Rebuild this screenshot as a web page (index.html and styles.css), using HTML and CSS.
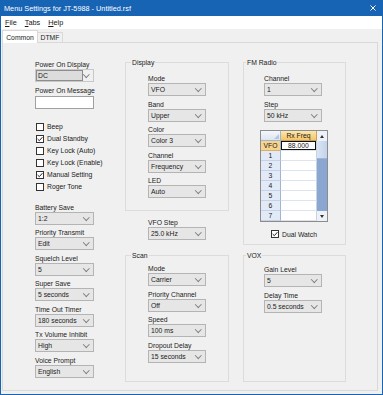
FILE: index.html
```html
<!DOCTYPE html>
<html>
<head>
    <title>Menu Settings for JT-5988 - Untitled.rsf</title>
    <meta name="viewport" content="width=device-width, initial-scale=1.0">
    <link rel="stylesheet" href="styles.css">
</head>
<body>
    <div class="window">
        <div class="titlebar">
            <span class="title">Menu Settings for JT-5988 - Untitled.rsf</span>
            <svg class="close" width="6" height="6" viewBox="0 0 6 6">
                <path d="M0.5 0.5 L5.5 5.5 M5.5 0.5 L0.5 5.5" stroke="#fff" stroke-width="1" fill="none"/>
            </svg>
        </div>
        <div class="menubar">
            <span class="menu-item"><u>F</u>ile</span>
            <span class="menu-item"><u>T</u>abs</span>
            <span class="menu-item"><u>H</u>elp</span>
        </div>

        <div class="tab-strip">
            <div class="tab active">Common</div>
            <div class="tab">DTMF</div>
        </div>

        <div class="tab-page">
            <!-- left column -->
            <div class="col-left">
                <div class="field">
                    <div class="field-label">Power On Display</div>
                    <div class="combo editable"><span class="combo-edit">DC</span></div>
                </div>
                <div class="field">
                    <div class="field-label">Power On Message</div>
                    <div class="textbox"></div>
                </div>

                <div class="checks">
                    <div class="check"><span class="box"></span>Beep</div>
                    <div class="check"><span class="box"><svg width="6" height="6" viewBox="0 0 6 6"><path d="M0.6 3 L2.3 4.7 L5.4 1.2" stroke="#222" stroke-width="1" fill="none"/></svg></span>Dual Standby</div>
                    <div class="check"><span class="box"></span>Key Lock (Auto)</div>
                    <div class="check"><span class="box"></span>Key Lock (Enable)</div>
                    <div class="check"><span class="box"><svg width="6" height="6" viewBox="0 0 6 6"><path d="M0.6 3 L2.3 4.7 L5.4 1.2" stroke="#222" stroke-width="1" fill="none"/></svg></span>Manual Setting</div>
                    <div class="check"><span class="box"></span>Roger Tone</div>
                </div>

                <div class="field">
                    <div class="field-label">Battery Save</div>
                    <div class="combo">1:2</div>
                </div>
                <div class="field">
                    <div class="field-label">Priority Transmit</div>
                    <div class="combo">Edit</div>
                </div>
                <div class="field">
                    <div class="field-label">Squelch Level</div>
                    <div class="combo">5</div>
                </div>
                <div class="field">
                    <div class="field-label">Super Save</div>
                    <div class="combo">5 seconds</div>
                </div>
                <div class="field">
                    <div class="field-label">Time Out Timer</div>
                    <div class="combo">180 seconds</div>
                </div>
                <div class="field">
                    <div class="field-label">Tx Volume Inhibit</div>
                    <div class="combo">High</div>
                </div>
                <div class="field">
                    <div class="field-label">Voice Prompt</div>
                    <div class="combo">English</div>
                </div>
            </div>

            <!-- middle column, top -->
            <div class="col-mid">
                <fieldset class="group">
                    <legend>Display</legend>
                    <div class="group-body display-body">
                        <div class="field">
                            <div class="field-label">Mode</div>
                            <div class="combo">VFO</div>
                        </div>
                        <div class="field">
                            <div class="field-label">Band</div>
                            <div class="combo">Upper</div>
                        </div>
                        <div class="field">
                            <div class="field-label">Color</div>
                            <div class="combo">Color 3</div>
                        </div>
                        <div class="field">
                            <div class="field-label">Channel</div>
                            <div class="combo">Frequency</div>
                        </div>
                        <div class="field">
                            <div class="field-label">LED</div>
                            <div class="combo">Auto</div>
                        </div>
                    </div>
                </fieldset>
                <div class="field vfo-step">
                    <div class="field-label">VFO Step</div>
                    <div class="combo">25.0 kHz</div>
                </div>
            </div>

            <!-- right column, top -->
            <fieldset class="group right fm">
                <legend>FM Radio</legend>
                <div class="group-body fm-body">
                    <div class="field">
                        <div class="field-label">Channel</div>
                        <div class="combo">1</div>
                    </div>
                    <div class="field">
                        <div class="field-label">Step</div>
                        <div class="combo">50 kHz</div>
                    </div>

                    <div class="fm-table">
                        <div class="dgv">
                            <div class="dgv-cells">
                                <div class="hdr corner"></div>
                                <div class="hdr col-sel">Rx Freq</div>
                                <div class="rowhdr sel">VFO</div><div class="cell"><span class="cell-edit">88.000</span></div>
                                <div class="rowhdr">1</div><div class="cell"></div>
                                <div class="rowhdr">2</div><div class="cell"></div>
                                <div class="rowhdr">3</div><div class="cell"></div>
                                <div class="rowhdr">4</div><div class="cell"></div>
                                <div class="rowhdr">5</div><div class="cell"></div>
                                <div class="rowhdr">6</div><div class="cell"></div>
                                <div class="rowhdr">7</div><div class="cell"></div>
                            </div>
                            <div class="vscroll">
                                <div class="sb-btn"><span class="arrow-up"></span></div>
                                <div class="sb-thumb"></div>
                                <div class="sb-track"></div>
                                <div class="sb-btn"><span class="arrow-down"></span></div>
                            </div>
                        </div>
                        <div class="check dual-watch"><span class="box"><svg width="6" height="6" viewBox="0 0 6 6"><path d="M0.6 3 L2.3 4.7 L5.4 1.2" stroke="#222" stroke-width="1" fill="none"/></svg></span>Dual Watch</div>
                    </div>
                </div>
            </fieldset>

            <!-- bottom row -->
            <fieldset class="group scan">
                <legend>Scan</legend>
                <div class="group-body scan-body">
                    <div class="field">
                        <div class="field-label">Mode</div>
                        <div class="combo">Carrier</div>
                    </div>
                    <div class="field">
                        <div class="field-label">Priority Channel</div>
                        <div class="combo">Off</div>
                    </div>
                    <div class="field">
                        <div class="field-label">Speed</div>
                        <div class="combo">100 ms</div>
                    </div>
                    <div class="field">
                        <div class="field-label">Dropout Delay</div>
                        <div class="combo">15 seconds</div>
                    </div>
                </div>
            </fieldset>

            <fieldset class="group right vox">
                <legend>VOX</legend>
                <div class="group-body vox-body">
                    <div class="field">
                        <div class="field-label">Gain Level</div>
                        <div class="combo">5</div>
                    </div>
                    <div class="field">
                        <div class="field-label">Delay Time</div>
                        <div class="combo">0.5 seconds</div>
                    </div>
                </div>
            </fieldset>
        </div>
    </div>
</body>
</html>
```

FILE: styles.css
```css
* {
    box-sizing: border-box;
}

body {
    margin: 0;
    font-family: "Liberation Sans", Arial, sans-serif;
    font-size: 6.8px;
    color: #1a1a1a;
    background: #fff;
}

.window {
    width: 383px;
    height: 395px;
    border: 1px solid #1763b4;
    border-top: 0;
    background: #f0f0f0;
    display: flex;
    flex-direction: column;
}

/* title + menu */
.titlebar {
    height: 16px;
    flex: none;
    background: #1763b4;
    color: #fff;
    font-size: 7.3px;
    display: flex;
    align-items: center;
    padding-left: 3px;
}

.title {
    flex: 1;
}

.close {
    margin-right: 6px;
}

.menubar {
    height: 13px;
    flex: none;
    background: #fff;
    font-size: 7.3px;
    display: flex;
    align-items: center;
}

.menu-item {
    padding: 0 4px;
}

/* tabs */
.tab-strip {
    height: 14px;
    flex: none;
    margin: 0 4px -1px 1px;
    display: flex;
    align-items: flex-end;
}

.tab {
    height: 10px;
    width: 25px;
    margin-bottom: 1px;
    border: 1px solid #d9d9d9;
    border-bottom: 0;
    border-left: 0;
    background: #f0f0f0;
    display: flex;
    align-items: center;
    justify-content: center;
}

.tab.active {
    height: 13px;
    width: 36px;
    margin-bottom: 0;
    border-left: 1px solid #d9d9d9;
    background: #fff;
    position: relative;
    z-index: 1;
}

.tab-page {
    flex: 1;
    margin: 0 4px 3px 1px;
    border: 1px solid #d9d9d9;
    padding: 15px 0 8px 32px;
    display: grid;
    grid-template-columns: 76px 104px 103px;
    grid-template-rows: auto 1fr;
    column-gap: 14px;
    row-gap: 6px;
}

/* fields */
.field-label {
    height: 9px;
    line-height: 9px;
    white-space: nowrap;
}

.field + .field {
    margin-top: 3.5px;
}

.combo {
    width: 58px;
    height: 13px;
    border: 1px solid #b4b4b4;
    background: #e6e6e6;
    padding-left: 2px;
    display: flex;
    align-items: center;
    white-space: nowrap;
}

.combo::after {
    content: "";
    width: 3.5px;
    height: 3.5px;
    margin-left: auto;
    margin-right: 5px;
    margin-top: -2px;
    border-right: 1px solid #808080;
    border-bottom: 1px solid #808080;
    transform: rotate(45deg);
    flex: none;
}

.combo.editable {
    background: #f0f0f0;
    border-color: #c8c8c8;
    padding: 0;
}

.combo-edit {
    width: 47px;
    height: 11px;
    border: 1px solid #8d8d8d;
    background: #dcdcdc;
    padding-left: 1px;
    display: flex;
    align-items: center;
}

.textbox {
    width: 59px;
    height: 13px;
    margin-top: 1.5px;
    border: 1px solid #a0a0a0;
    background: #fff;
}

/* checkboxes */
.check {
    height: 12px;
    display: flex;
    align-items: center;
    gap: 3px;
    white-space: nowrap;
}

.box {
    width: 8px;
    height: 8px;
    border: 1px solid #333;
    background: #fff;
    display: flex;
    flex: none;
}

/* left column */
.col-left {
    grid-column: 1;
    grid-row: 1 / 3;
    margin-top: 2px;
}

.col-left .combo {
    width: 59px;
}

.checks {
    margin: 11.5px 0 10px 1px;
}

/* group boxes */
.group {
    margin: 0;
    padding: 0;
    min-width: 0;
    border: 1px solid #dcdcdc;
}

.group legend {
    margin-left: 5px;
    padding: 0 1px;
    line-height: 9px;
}

.group.right legend {
    margin-left: 2px;
}

.display-body {
    padding: 7px 0 12px 22px;
}

.vfo-step {
    margin: 7px 0 0 23px;
}

.fm {
    grid-column: 3;
    grid-row: 1;
    align-self: start;
}

.fm-body {
    padding: 7px 0 5px 20px;
}

.scan {
    grid-column: 2;
    grid-row: 2;
}

.scan-body {
    padding: 4px 0 0 22px;
}

.vox {
    grid-column: 3;
    grid-row: 2;
}

.vox-body {
    padding: 5px 0 0 20px;
}

/* FM channel grid */
.fm-table {
    width: 68px;
    margin: 8.5px 0 0 -4px;
}

.dgv {
    width: 68px;
    height: 92px;
    border: 1px solid #8c8c8c;
    display: flex;
    background: #fff;
}

.dgv-cells {
    display: grid;
    grid-template-columns: 20px 36px;
    grid-auto-rows: 10px;
}

.hdr,
.rowhdr,
.cell {
    display: flex;
    align-items: center;
    justify-content: center;
}

.hdr.corner {
    background: linear-gradient(#f4f7fc, #dbe5f2);
    border-right: 1px solid #9eb6ce;
    border-bottom: 1px solid #9eb6ce;
    justify-content: flex-end;
    align-items: flex-end;
    padding: 0 1px 1px 0;
}

.hdr.corner::after {
    content: "";
    border-left: 5px solid transparent;
    border-bottom: 5px solid #b4c5dc;
}

.hdr.col-sel {
    background: linear-gradient(#fde6ae, #f5c566);
    border-right: 1px solid #c9a15a;
    border-bottom: 1px solid #c9a15a;
}

.rowhdr {
    background: #e1eaf6;
    border-right: 1px solid #9eb6ce;
    border-bottom: 1px solid #c3d3e7;
}

.rowhdr.sel {
    background: #f8d38d;
    border-bottom-color: #d9b067;
}

.cell {
    border-right: 1px solid #c8d3e2;
    border-bottom: 1px solid #dde4ee;
}

.cell-edit {
    width: 100%;
    height: 100%;
    border: 1px solid #111;
    display: flex;
    align-items: center;
    justify-content: center;
}

.vscroll {
    width: 10px;
    display: flex;
    flex-direction: column;
}

.sb-btn {
    height: 10px;
    flex: none;
    background: #edf2f9;
    display: flex;
    align-items: center;
    justify-content: center;
}

.arrow-up {
    border-left: 2.5px solid transparent;
    border-right: 2.5px solid transparent;
    border-bottom: 3px solid #333;
}

.arrow-down {
    border-left: 2.5px solid transparent;
    border-right: 2.5px solid transparent;
    border-top: 3px solid #333;
}

.sb-thumb {
    height: 18px;
    flex: none;
    background: linear-gradient(90deg, #dbe5f4, #c3d3eb);
    border-bottom: 1px solid #9fb6d9;
}

.sb-track {
    flex: 1;
    background: #8aa6d1;
}

.dual-watch {
    height: 10px;
    margin-top: 7px;
    justify-content: center;
}
```
